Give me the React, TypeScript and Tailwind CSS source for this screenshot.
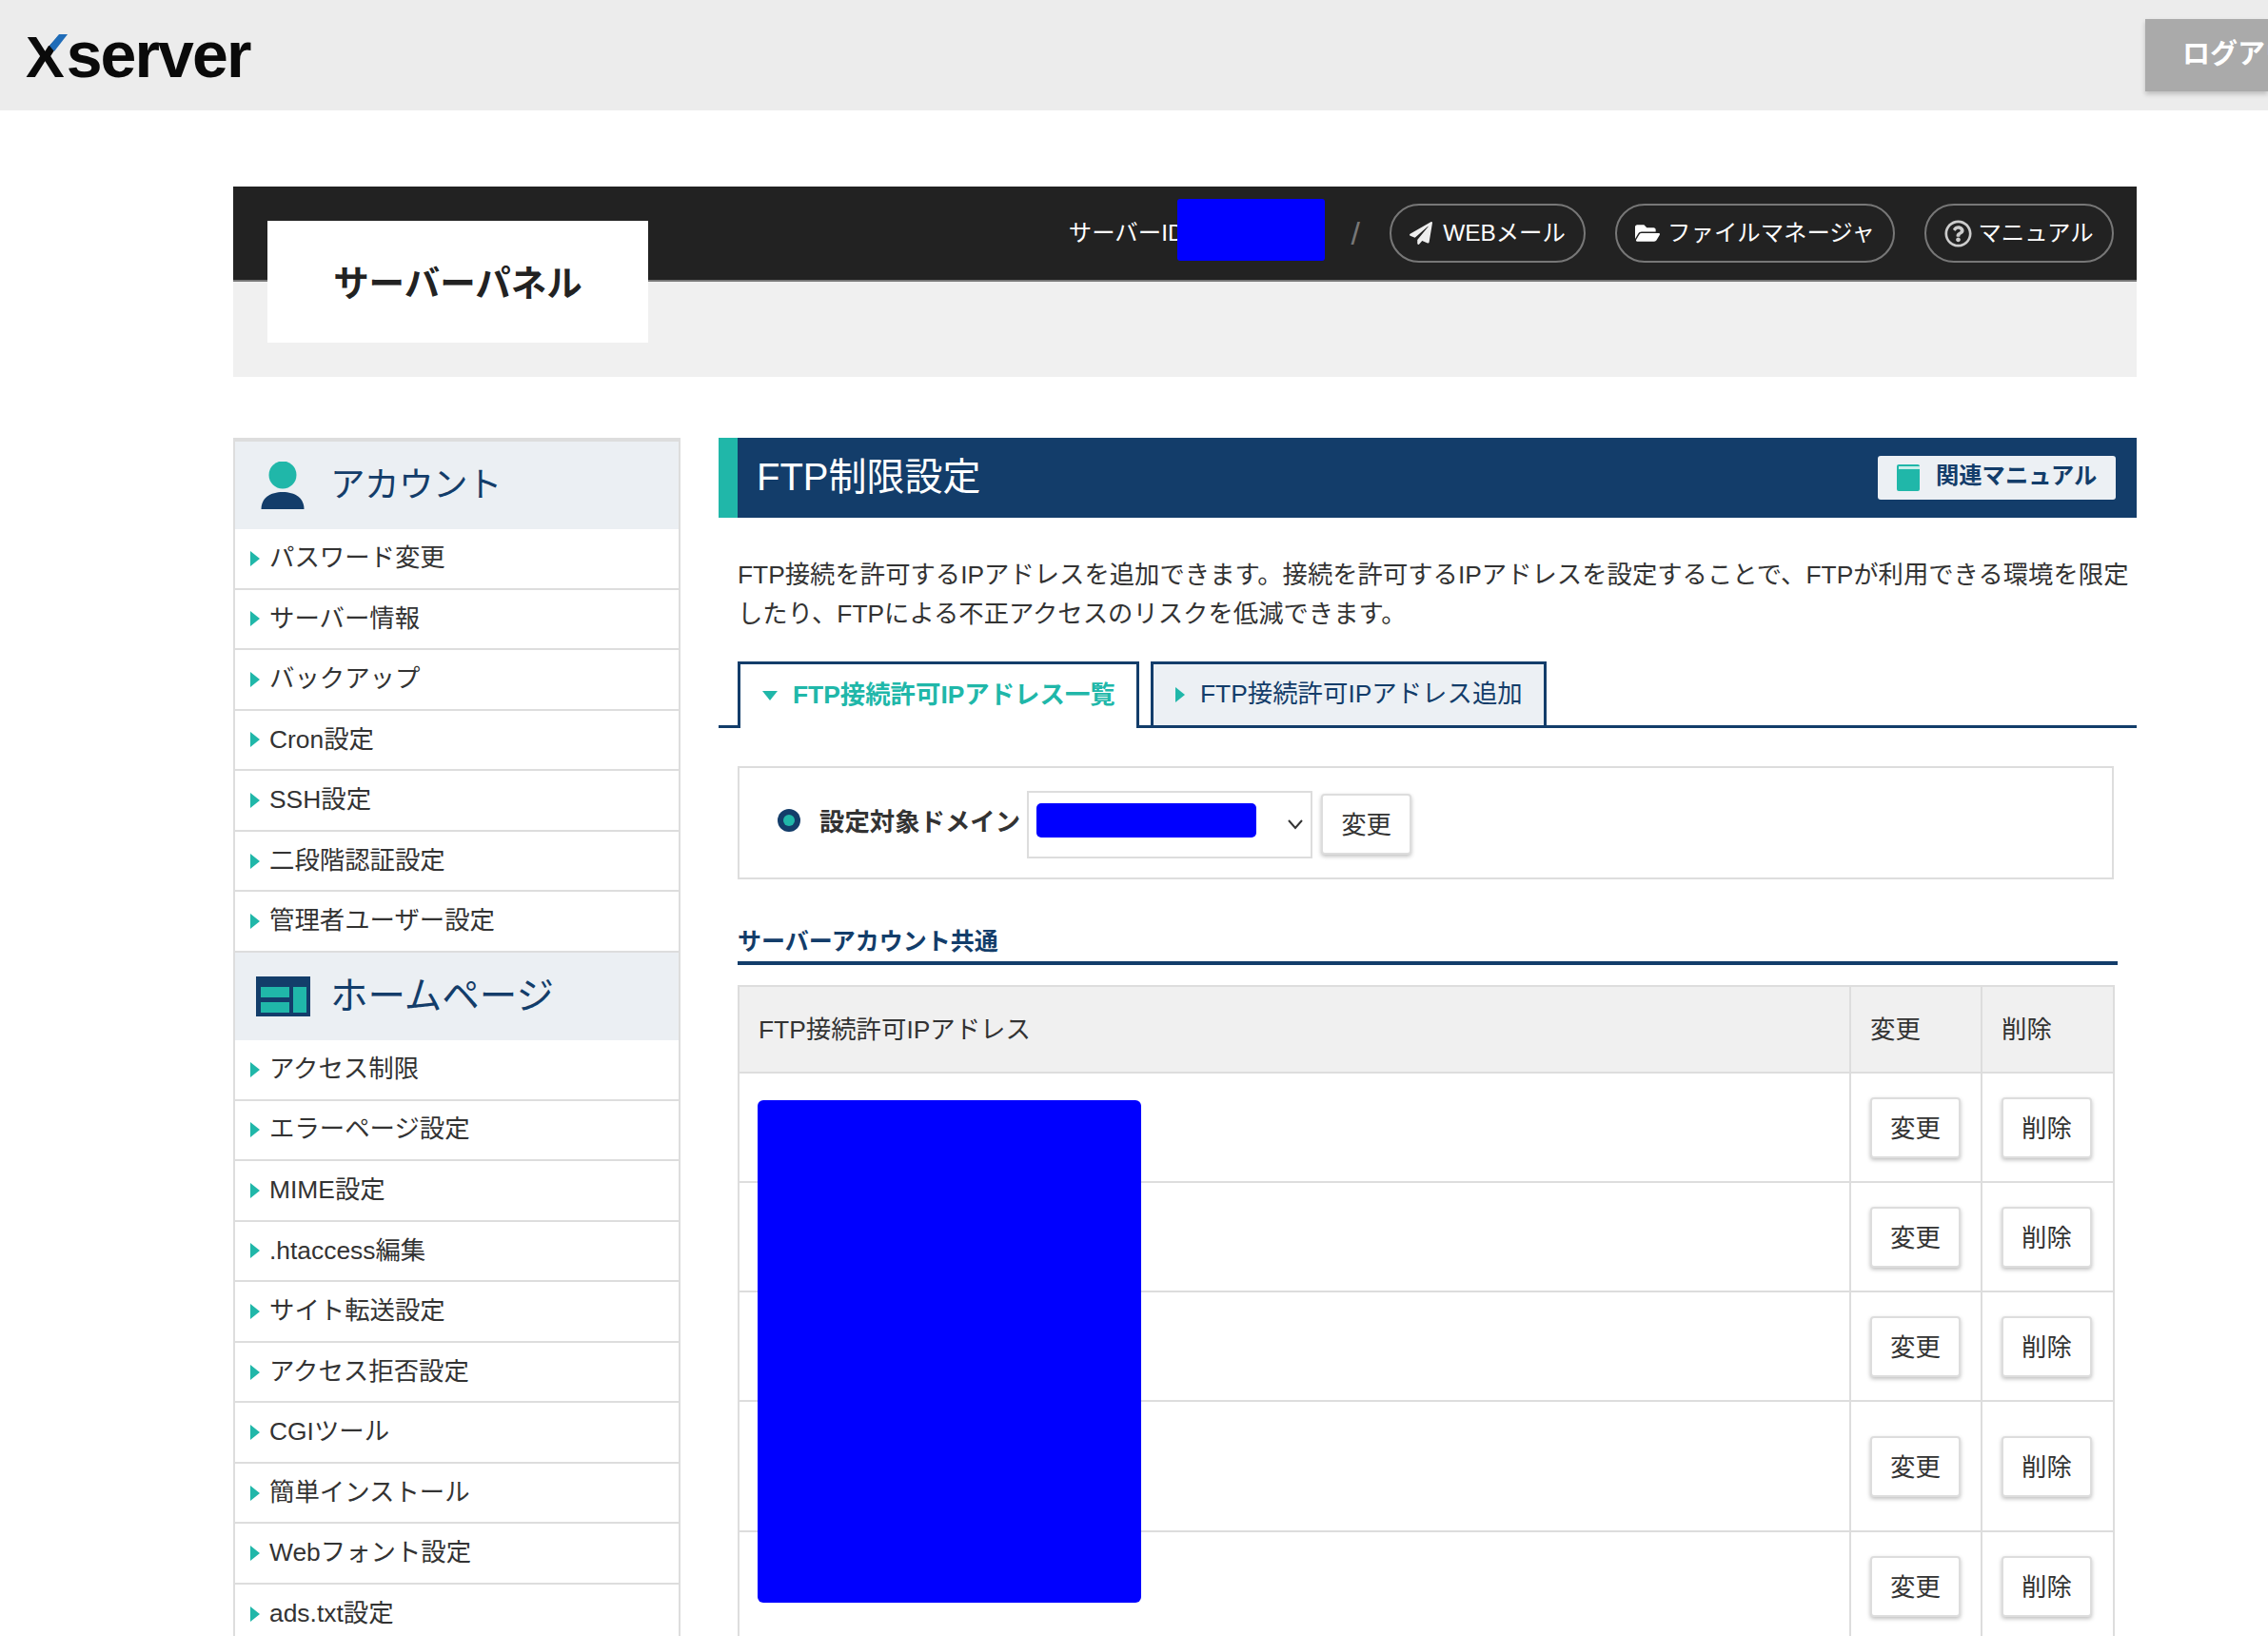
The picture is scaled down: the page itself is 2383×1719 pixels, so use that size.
import type { ReactNode } from 'react';
import { FaPaperPlane, FaFolderOpen, FaRegQuestionCircle } from 'react-icons/fa';

const accountItems = ['パスワード変更', 'サーバー情報', 'バックアップ', 'Cron設定', 'SSH設定', '二段階認証設定', '管理者ユーザー設定'];
const homepageItems = ['アクセス制限', 'エラーページ設定', 'MIME設定', '.htaccess編集', 'サイト転送設定', 'アクセス拒否設定', 'CGIツール', '簡単インストール', 'Webフォント設定', 'ads.txt設定'];
const rowHeights = ['h-[115px]', 'h-[115px]', 'h-[115px]', 'h-[137px]', 'h-[115px]'];

function RightArrow() {
  return <span className="h-0 w-0 shrink-0 border-y-[8px] border-l-[10px] border-y-transparent border-l-[#20b7a9]" />;
}

function SideHeading({ icon, label, size }: { icon: ReactNode; label: string; size: string }) {
  return (
    <div className="flex h-[92px] items-center bg-[#ebeff3]">
      <div className="flex w-[100px] shrink-0 justify-center">{icon}</div>
      <span className={`text-[#133d6a] ${size}`}>{label}</span>
    </div>
  );
}

function SideList({ items }: { items: string[] }) {
  return (
    <ul>
      {items.map((item) => (
        <li key={item} className="flex h-[63.57px] items-center gap-[10px] border-b-2 border-[#dddddd] pl-[16px] text-[26.4px] text-[#333333]">
          <RightArrow />
          {item}
        </li>
      ))}
    </ul>
  );
}

function SmallButton({ label }: { label: string }) {
  return (
    <button
      type="button"
      className="h-[64px] w-[95px] rounded-[4px] border-2 border-[#dddddd] bg-white pt-[5px] text-[26.4px] text-[#333333] shadow-[0_2px_4px_rgba(0,0,0,0.25)]"
    >
      {label}
    </button>
  );
}

function Pill({ width, gap, icon, label }: { width: string; gap: string; icon: ReactNode; label: string }) {
  return (
    <a className={`flex h-[62px] items-center justify-center rounded-full border-2 border-[#777777] text-[24.4px] text-white ${width} ${gap}`}>
      {icon}
      {label}
    </a>
  );
}

export default function App() {
  return (
    <div className="h-[1719px] overflow-hidden bg-white font-['Liberation_Sans','Noto_Sans_CJK_JP',sans-serif] text-[#333333]">
      <header className="flex h-[116px] items-start justify-between bg-[#ececec]">
        {/* logo: baseline sits at y=80, x-height is far larger than the cap ratio of the font */}
        <div className="relative mt-[22px] ml-[27px] flex h-[70px] items-baseline font-bold text-[#0a0a0a]">
          <span className="text-[61px] leading-[70px]">X</span>
          <span className="ml-[2px] text-[68px] leading-[70px] tracking-[-1.9px]">server</span>
          <svg className="absolute top-[14px] left-[18px]" width="26" height="20" viewBox="0 0 26 20">
            <polygon points="0,0 18,0 7,12 3,12" fill="#ececec" />
            <polygon points="17,0 26,0 12,18 7,12" fill="#1f6cb8" />
          </svg>
        </div>
        <button
          type="button"
          className="mt-[20px] h-[76px] w-[129px] overflow-hidden bg-[#aaaaaa] pl-[39px] text-left text-[29px] font-bold whitespace-nowrap text-white shadow-[0_3px_5px_rgba(0,0,0,0.2)]"
        >
          ログアウト
        </button>
      </header>

      <div className="mt-[80px] ml-[245px] w-[2000px]">
        <div className="relative">
          <div className="flex h-[100px] items-center justify-end gap-[31px] border-b-2 border-[#777777] bg-[#222222] pr-[24px]">
            <div className="flex items-center text-[24.4px] text-white">
              <span>サーバーID</span>
              <div className="-ml-[8px] mb-[8px] h-[65px] w-[155px] rounded-[3px] bg-[#0000ff]" />
              <span className="ml-[28px] text-[34px] text-[#777777]">/</span>
            </div>
            <Pill width="w-[206px]" gap="gap-[11px]" icon={<FaPaperPlane className="text-[24px] text-[#eeeeee]" />} label="WEBメール" />
            <Pill width="w-[294px]" gap="gap-[8px]" icon={<FaFolderOpen className="text-[26px]" />} label="ファイルマネージャ" />
            <Pill width="w-[199px]" gap="gap-[6px]" icon={<FaRegQuestionCircle className="text-[29px] text-[#cccccc]" />} label="マニュアル" />
          </div>
          <div className="h-[100px] bg-[#f0f0f0]" />
          <div className="absolute top-[36px] left-[36px] flex h-[128px] w-[400px] items-center justify-center bg-white pt-[5px] text-[37.5px] font-bold text-[#222222]">
            サーバーパネル
          </div>
        </div>

        <div className="mt-[64px] flex gap-[40px]">
          <aside className="w-[470px] shrink-0 border-x-2 border-t-4 border-[#dddddd]">
            <SideHeading
              label="アカウント"
              size="text-[36.5px] tracking-[-0.5px]"
              icon={
                <svg width="46" height="50" viewBox="0 0 46 50">
                  <circle cx="23" cy="14" r="14.5" fill="#20b7a9" />
                  <path d="M0.5 50C0.5 38 10 32 23 32s22.500 6 22.500 18c-8 1-37 1-45 0z" fill="#133d6a" />
                </svg>
              }
            />
            <SideList items={accountItems} />
            <SideHeading
              label="ホームページ"
              size="text-[39.5px]"
              icon={
                <svg width="57" height="42" viewBox="0 0 57 42">
                  <rect width="57" height="42" fill="#133d6a" />
                  <rect x="5" y="11" width="30" height="11" fill="#20b7a9" />
                  <rect x="5" y="27" width="30" height="11" fill="#20b7a9" />
                  <rect x="39" y="11" width="14" height="27" fill="#20b7a9" />
                </svg>
              }
            />
            <SideList items={homepageItems} />
          </aside>

          <main className="w-[1490px] shrink-0">
            <div className="flex h-[84px] items-center justify-between border-l-[20px] border-[#20b7a9] bg-[#133d6a] pr-[22px] pl-[20px]">
              <h1 className="pb-[2px] text-[40px] text-white">FTP制限設定</h1>
              <a className="flex h-[46px] w-[250px] items-center gap-[17px] rounded-[3px] bg-[#ecf0f4] pl-[20px] text-[24.3px] font-bold text-[#133d6a]">
                <svg width="24" height="28" viewBox="0 0 24 28">
                  <rect width="24" height="28" rx="2" fill="#20b7a9" />
                  <rect x="2" y="2" width="22" height="3" fill="#c9efeb" />
                </svg>
                <span className="pb-[4px]">関連マニュアル</span>
              </a>
            </div>

            <p className="mt-[40px] pl-[20px] text-[26.35px] leading-[41px]">
              FTP接続を許可するIPアドレスを追加できます。接続を許可するIPアドレスを設定することで、FTPが利用できる環境を限定
              <br />
              したり、FTPによる不正アクセスのリスクを低減できます。
            </p>

            <div className="mt-[29px] flex h-[70px] gap-[12px] border-b-[3px] border-[#133d6a] pl-[20px]">
              <div className="flex h-[70px] w-[422px] items-center gap-[16px] border-x-[3px] border-t-[3px] border-[#133d6a] bg-white pb-[2px] pl-[23px] text-[26.4px] font-bold text-[#20b7a9]">
                <span className="h-0 w-0 border-x-[8px] border-t-[10px] border-x-transparent border-t-[#20b7a9]" />
                FTP接続許可IPアドレス一覧
              </div>
              <div className="flex h-[67px] w-[416px] items-center gap-[16px] border-x-[3px] border-t-[3px] border-[#133d6a] bg-[#ecf0f4] pl-[23px] text-[26.4px] text-[#133d6a]">
                <RightArrow />
                FTP接続許可IPアドレス追加
              </div>
            </div>

            <div className="mt-[40px] ml-[20px] flex h-[119px] w-[1446px] items-center border-2 border-[#dddddd] pl-[40px]">
              <span className="mb-[6px] flex h-[24px] w-[24px] items-center justify-center rounded-full bg-[#133d6a]">
                <span className="h-[12px] w-[12px] rounded-full bg-[#20b7a9]" />
              </span>
              <span className="ml-[20px] text-[26.4px] font-bold">設定対象ドメイン</span>
              <div className="mt-[3px] ml-[7px] flex h-[71px] w-[300px] items-start justify-between border-2 border-[#dddddd] pt-[11px] pr-[7px] pl-[8px]">
                <div className="h-[36px] w-[231px] rounded-[5px] bg-[#0000ff]" />
                <svg className="mt-[16px]" width="18" height="12" viewBox="0 0 18 12">
                  <path d="M2 2l7 8 7-8" fill="none" stroke="#333333" strokeWidth="2" />
                </svg>
              </div>
              <div className="mt-[2px] ml-[9px]">
                <SmallButton label="変更" />
              </div>
            </div>

            <h2 className="mt-[45px] ml-[20px] h-[45px] w-[1450px] border-b-4 border-[#133d6a] text-[25px] leading-[41px] font-bold text-[#133d6a]">
              サーバーアカウント共通
            </h2>

            <div className="relative mt-[21px] ml-[20px] w-[1445px]">
              <table className="w-full table-fixed border-collapse text-[26.4px]">
                <colgroup>
                  <col className="w-[1168px]" />
                  <col className="w-[138px]" />
                  <col className="w-[139px]" />
                </colgroup>
                <thead>
                  <tr className="h-[91px] bg-[#f0f0f0]">
                    <th className="border-2 border-[#dddddd] pt-[2px] pl-[20px] text-left font-normal">FTP接続許可IPアドレス</th>
                    <th className="border-2 border-[#dddddd] pt-[2px] pl-[20px] text-left font-normal">変更</th>
                    <th className="border-2 border-[#dddddd] pt-[2px] pl-[20px] text-left font-normal">削除</th>
                  </tr>
                </thead>
                <tbody>
                  {rowHeights.map((height, i) => (
                    <tr key={i} className={height}>
                      <td className="border-2 border-[#dddddd]" />
                      <td className="border-2 border-[#dddddd] pl-[20px]">
                        <SmallButton label="変更" />
                      </td>
                      <td className="border-2 border-[#dddddd] pl-[20px]">
                        <SmallButton label="削除" />
                      </td>
                    </tr>
                  ))}
                </tbody>
              </table>
              <div className="absolute top-[121px] left-[21px] h-[528px] w-[403px] rounded-[6px] bg-[#0000ff]" />
            </div>
          </main>
        </div>
      </div>
    </div>
  );
}
